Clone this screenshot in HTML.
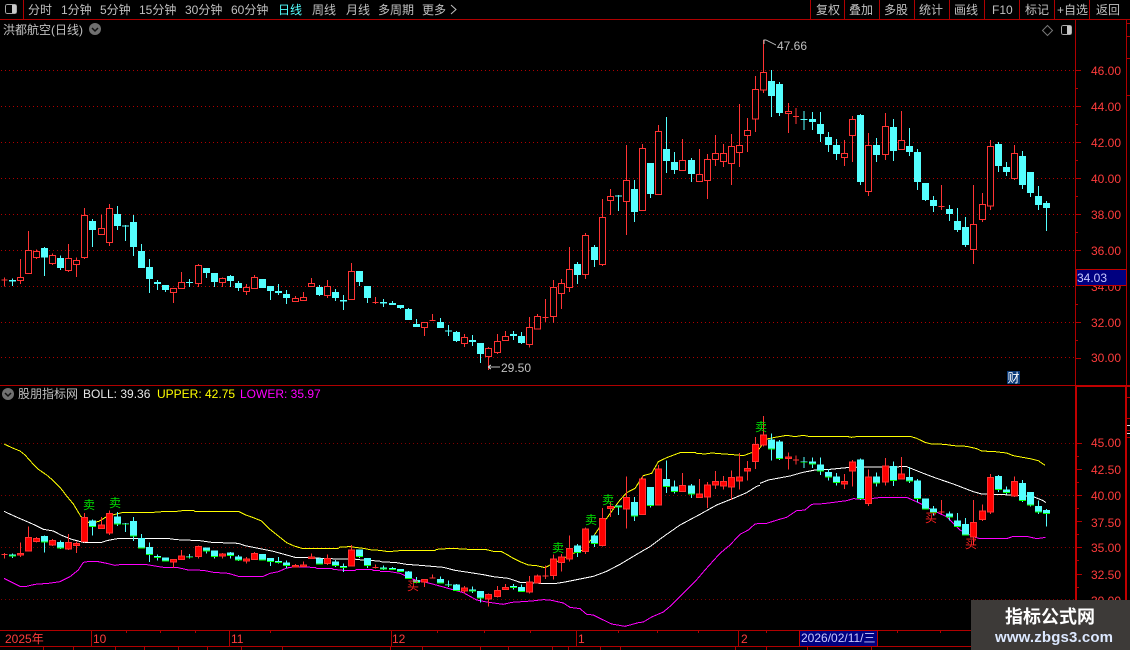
<!DOCTYPE html>
<html><head><meta charset="utf-8"><title>K</title>
<style>
html,body{margin:0;padding:0;background:#000;width:1130px;height:650px;overflow:hidden}
svg{display:block;position:absolute;left:0;top:0}
text{font-family:"Liberation Sans","WenQuanYi Zen Hei","Noto Sans CJK SC",sans-serif;font-size:12px}
.m{fill:#c0c0c0}
.ax{fill:#ff3c3c}
.w path,.b path,.r path{fill:none;vector-effect:non-scaling-stroke;stroke-width:1}
.b path{stroke-width:7}
.r path{fill:var(--rf,#000)}
.l{fill:none;stroke-width:1;vector-effect:non-scaling-stroke;shape-rendering:crispEdges}
</style></head>
<body>
<svg width="1130" height="650" viewBox="0 0 1130 650" xmlns="http://www.w3.org/2000/svg">
<defs>
<g id="rw" class="w" shape-rendering="crispEdges">
<path transform="translate(0 190) scale(.33333)" d="M13.5 262V290M61.5 207V282M85.5 123V251M109.5 178V207M157.5 190V225M205.5 162V246M229.5 202V261M253.5 54V207M304.5 74V134M328.5 42V168M520.5 295V339M544.5 246V296M595.5 222V291M667.5 262V291M739.5 282V315M763.5 255V296M886.5 318V335M910.5 306V332M934.5 264V290M982.5 270V324M1054.5 219V329M1126.5 321V342"/>
<path transform="translate(380 120) scale(.33333)" d="M133.5 606V648M157.5 582V603M253.5 642V681M325.5 681V750M352.5 642V702M376.5 633V662M448.5 591V683M472.5 582V628M496.5 537V606M520.5 480V609M544.5 477V567M568.5 381V516M616.5 339V477M667.5 237V438M691.5 207V285M739.5 75V345M787.5 72V272M835.5 15V224M907.5 57V152M958.5 87V185M982.5 102V237M1006.5 45V138M1030.5 72V141M1054.5 42V195M1078.5 -48V141M1102.5 -6V96"/>
<path transform="translate(740 30) scale(.33333)" d="M46.5 138V306M70.5 30V189M145.5 219V309M168.5 234V282M313.5 330V408M337.5 258V396M385.5 309V498M436.5 249V390M484.5 243V359M604.5 465V540M700.5 465V702M727.5 489V576M751.5 330V540M823.5 345V450"/>
</g>
<g id="rb" class="r" shape-rendering="crispEdges">
<path transform="translate(0 190) scale(.33333)" d="M4.5 270h18M52.5 263h18V271h-18zM76.5 182h18V250h-18zM100.5 185h18V202h-18zM148.5 197h18V220h-18zM196.5 206h18V241h-18zM220.5 212h18V223h-18zM244.5 77h18V202h-18zM295.5 116h18V133h-18zM319.5 56h18V157h-18zM511.5 296h18V307h-18zM535.5 278h18V295h-18zM586.5 227h18V280h-18zM658.5 266h18V277h-18zM730.5 293h18V304h-18zM754.5 263h18V295h-18zM877.5 326h18V334h-18zM901.5 323h18V331h-18zM925.5 281h18V289h-18zM973.5 290h18V316h-18zM1045.5 245h18V328h-18zM1117.5 338h18"/>
<path transform="translate(380 120) scale(.33333)" d="M124.5 608h18V623h-18zM148.5 601h18M244.5 653h18V670h-18zM316.5 686h18V710h-18zM343.5 665h18V697h-18zM367.5 650h18V661h-18zM439.5 623h18V673h-18zM463.5 590h18V627h-18zM487.5 592h18M511.5 503h18V589h-18zM535.5 491h18V520h-18zM559.5 449h18V502h-18zM607.5 347h18V463h-18zM658.5 293h18V433h-18zM682.5 230h18V241h-18zM730.5 182h18V244h-18zM778.5 86h18V271h-18zM826.5 35h18V223h-18zM898.5 122h18V151h-18zM949.5 164h18V184h-18zM973.5 119h18V181h-18zM997.5 101h18V118h-18zM1021.5 101h18V124h-18zM1045.5 80h18V130h-18zM1069.5 77h18V97h-18zM1093.5 32h18V46h-18z"/>
<path transform="translate(740 30) scale(.33333)" d="M37.5 179h18V267h-18zM61.5 128h18V180h-18zM136.5 244h18V250h-18zM159.5 259h18M304.5 371h18V382h-18zM328.5 269h18V316h-18zM376.5 347h18V484h-18zM427.5 290h18V373h-18zM475.5 332h18V358h-18zM595.5 529h18M691.5 584h18V658h-18zM718.5 524h18V568h-18zM742.5 350h18V528h-18zM814.5 371h18V445h-18z"/>
</g>
<g id="cw" class="w" shape-rendering="crispEdges">
<path transform="translate(0 190) scale(.33333)" d="M37.5 265V288M133.5 171V258M181.5 196V240M277.5 87V171M352.5 48V120M376.5 105V153M400.5 75V198M424.5 162V234M448.5 207V309M472.5 270V300M496.5 285V306M568.5 267V291M619.5 234V264M643.5 249V291M691.5 255V291M715.5 273V303M787.5 267V294M811.5 288V330M835.5 282V315M859.5 300V342M958.5 285V318M1006.5 297V333M1030.5 315V360M1078.5 243V288M1102.5 288V339"/>
<path transform="translate(380 120) scale(.33333)" d="M10.5 537V561M37.5 543V555M61.5 555V567M85.5 564V600M109.5 597V621M181.5 594V624M205.5 615V648M229.5 633V666M277.5 645V678M301.5 669V729M400.5 633V660M424.5 636V672M592.5 426V492M643.5 375V441M715.5 225V273M763.5 180V306M811.5 129V234M859.5 -9V159M883.5 96V162M934.5 114V186"/>
<path transform="translate(740 30) scale(.33333)" d="M94.5 120V261M118.5 156V258M192.5 243V300M217.5 246V300M241.5 246V336M265.5 306V366M289.5 327V390M361.5 252V465M409.5 324V396M460.5 267V393M508.5 294V378M532.5 357V480M556.5 459V513M580.5 498V546M628.5 525V573M652.5 534V606M676.5 561V651M775.5 336V426M799.5 396V438M847.5 363V477M871.5 426V501M895.5 468V540M919.5 513V603"/>
</g>
<g id="cb" class="b" shape-rendering="crispEdges">
<path transform="translate(0 190) scale(.33333)" d="M37.5 270V275M133.5 174V203M181.5 204V234M277.5 93V120M352.5 72V108M376.5 107V110M400.5 96V171M424.5 183V234M448.5 231V267M472.5 276V282M496.5 285V300M568.5 276V279M619.5 234V249M643.5 249V276M691.5 258V273M715.5 279V294M787.5 267V294M811.5 288V303M835.5 303V309M859.5 312V324M958.5 291V315M1006.5 306V324M1030.5 330V335M1078.5 243V276M1102.5 288V324"/>
<path transform="translate(380 120) scale(.33333)" d="M10.5 546V551M37.5 549V555M61.5 555V564M85.5 567V600M109.5 612V621M181.5 606V624M205.5 632V635M229.5 636V663M277.5 660V666M301.5 669V702M400.5 642V648M424.5 648V669M592.5 432V465M643.5 381V420M715.5 226V230M763.5 207V276M811.5 129V222M859.5 87V123M883.5 126V150M934.5 120V162"/>
<path transform="translate(740 30) scale(.33333)" d="M94.5 153V198M118.5 162V249M192.5 267V270M217.5 267V276M241.5 282V312M265.5 321V345M289.5 345V372M361.5 255V456M409.5 345V375M460.5 291V363M508.5 348V366M532.5 366V456M556.5 459V510M580.5 510V528M628.5 537V552M652.5 573V600M676.5 591V645M775.5 342V408M799.5 411V426M847.5 378V465M871.5 426V489M895.5 498V525M919.5 519V534"/>
</g>
</defs>

<!-- grid -->
<g stroke="#b00000" stroke-width="1" stroke-dasharray="1 3" shape-rendering="crispEdges">
<path d="M1 70.5H1075M1 106.5H1075M1 142.5H1075M1 178.5H1075M1 214.5H1075M1 250.5H1075M1 286.5H1075M1 322.5H1075M1 357.5H1075"/>
</g>
<g stroke="#800000" stroke-width="1" stroke-dasharray="1 3" shape-rendering="crispEdges">
<path d="M1 443.5H1075M1 495.5H1075M1 547.5H1075M1 599.5H1075"/>
</g>

<!-- frame -->
<g stroke="#b00000" stroke-width="1" shape-rendering="crispEdges" fill="none">
<path d="M0 19.5H1130M23.5 0V19M810.5 0V19M844.5 0V19M879.5 0V19M914.5 0V19M949.5 0V19M984.5 0V19M1019.5 0V19M1054.5 0V19M1089.5 0V19"/>
<path d="M1075.5 20V385M1126.5 20V385M0 385.5H1075"/>
<path d="M0 630.5H1075M0 646.5H1075"/>
<path d="M91.5 630V646M229.5 630V646M391.5 630V646M576.5 630V646M738.5 630V646"/>
<path d="M126.5 630V633M160.5 630V633M195.5 630V633M270.5 630V633M437.5 630V633M484.5 630V633M530.5 630V633M618.5 630V633M657.5 630V633M698.5 630V633M766.5 630V633M897.5 630V633M940.5 630V633"/>
<path d="M43.5 646V650M73.5 646V650M115.5 646V650M144.5 646V650M178.5 646V650M207.5 646V650M241.5 646V650M282.5 646V650M390.5 646V650M422.5 646V650M480.5 646V650M508.5 646V650M552.5 646V650M568.5 646V650M600.5 646V650M620.5 646V650M735.5 646V650M766.5 646V650M807.5 646V650M871.5 646V650"/>
<path d="M1076 70.5h5M1076 106.5h5M1076 142.5h5M1076 178.5h5M1076 214.5h5M1076 250.5h5M1076 322.5h5M1076 358.5h5M1076 88.5h2M1076 124.5h2M1076 160.5h2M1076 196.5h2M1076 232.5h2M1076 304.5h2M1076 340.5h2"/>
<path d="M1077 443.5h5M1077 469.5h5M1077 495.5h5M1077 521.5h5M1077 547.5h5M1077 574.5h5M1077 456.5h2M1077 482.5h2M1077 508.5h2M1077 534.5h2M1077 560.5h2M1077 587.5h2"/>
<path d="M1127 23.5h3M1127 36.5h3M1127 58.5h3M1127 95.5h3M1127 430.5h3M1127 397.5h3M1127 418.5h3M1127 437.5h3"/>
</g>
<g fill="#c00000" shape-rendering="crispEdges">
<rect x="1075" y="385" width="55" height="2"/>
<rect x="1075" y="385" width="2" height="246"/>
<rect x="1125" y="385" width="2" height="246"/>
</g>
<rect x="1127" y="425" width="3" height="1" fill="#ddd"/>
<rect x="1127" y="433" width="3" height="1" fill="#ddd"/>

<!-- upper candles -->
<g stroke="#ff3333" style="--rf:#000"><use href="#rw"/><use href="#rb"/></g>
<g stroke="#54ffff"><use href="#cw"/><use href="#cb"/></g>

<!-- boll lines -->
<g transform="translate(0 380) scale(.33333)">
<polyline class="l" stroke="#ffff00" points="12,192 40,205 60,213 75,225 100,253 115,268 140,285 160,302 180,322 200,348 220,372 243,410 265,427 295,425 320,410 345,403 370,397 460,397 500,394 530,394 555,391 580,391 585,394 715,394 735,404 760,413 785,423 810,448 835,468 860,488 880,497 905,505 1015,505 1020,501 1050,500 1090,505 1115,510 1140,511"/>
<polyline class="l" stroke="#ffffff" points="12,394 40,407 70,420 100,433 130,448 160,453 185,466 215,478 250,487 305,487 320,482 340,478 360,475 500,475 530,479 600,482 635,487 715,490 735,497 760,502 790,508 820,514 860,525 885,532 920,533 1015,537 1060,537 1095,541 1140,543"/>
<polyline class="l" stroke="#ff00ff" points="12,595 60,619 80,619 105,613 145,610 180,605 210,590 235,570 250,547 270,544 290,544 320,550 345,556 365,553 435,553 465,558 490,562 530,562 565,570 610,571 640,577 685,580 715,589 790,589 810,580 835,575 860,564 880,561 945,562 950,565 995,565 1000,568 1030,571 1065,571 1070,568 1115,568 1120,571 1140,571"/>
</g>
<g transform="translate(380 410) scale(.33333)">
<polyline class="l" stroke="#ffff00" points="0,421 25,425 70,421 165,421 170,418 215,415 265,418 315,418 340,424 365,425 385,436 400,445 420,455 445,465 470,467 495,473 520,460 550,445 580,430 610,420 640,380 660,350 680,325 700,297 720,270 740,248 765,235 790,197 815,190 835,155 860,143 900,128 945,127 950,130 975,132 995,129 1020,131 1060,134 1090,137 1115,128 1140,115"/>
<polyline class="l" stroke="#ffffff" points="0,455 50,458 80,463 120,466 190,472 225,481 265,487 310,494 340,500 385,505 420,517 500,521 530,520 555,516 590,509 640,499 680,484 720,463 770,433 810,410 850,380 900,345 960,313 1010,285 1060,265 1100,248 1130,229 1140,226"/>
<polyline class="l" stroke="#ff00ff" points="0,485 30,485 60,490 100,508 150,520 190,531 250,548 290,570 320,576 370,583 395,577 410,576 455,573 490,569 510,570 550,579 570,592 600,596 620,613 640,615 670,630 695,642 735,649 750,645 775,638 790,636 815,621 850,606 875,585 945,515 975,480 1020,430 1050,405 1080,373 1105,360 1125,342 1140,340"/>
</g>
<g transform="translate(740 380) scale(.33333)">
<polyline class="l" stroke="#ffff00" points="60,204 75,178 100,173 140,166 165,170 190,166 210,170 325,170 335,172 355,169 510,169 530,175 555,187 575,192 615,193 640,197 680,199 710,206 725,213 765,215 800,219 820,227 870,236 895,242 915,256"/>
<polyline class="l" stroke="#ffffff" points="60,310 85,300 150,288 185,278 225,270 270,268 330,262 500,260 550,280 590,295 640,312 700,335 725,342 820,345 880,350 910,362 917,368"/>
<polyline class="l" stroke="#ff00ff" points="60,431 80,430 115,419 140,412 170,392 195,390 215,373 250,371 320,362 340,356 375,358 425,352 500,352 540,370 580,392 620,410 660,450 700,470 720,476 800,476 820,469 860,469 890,476 917,472"/>
</g>

<!-- lower candles -->
<g transform="translate(0 444) scale(1 .5778) translate(0 -88.5)">
<g stroke="#ff3333" style="--rf:#ff0000"><use href="#rw"/><use href="#rb"/></g>
<g stroke="#54ffff"><use href="#cw"/></g>
</g>
<g transform="translate(0 445) scale(1 .5778) translate(0 -88.5)"><g stroke="#00ff00"><use href="#cb"/></g></g>
<g transform="translate(0 444) scale(1 .5778) translate(0 -88.5)"><g stroke="#54ffff"><use href="#cb"/></g></g>

<!-- signals -->
<g fill="#00e000" text-anchor="middle">
<text x="89" y="509">卖</text><text x="115" y="507">卖</text><text x="558" y="552">卖</text><text x="591" y="524">卖</text><text x="608" y="504">卖</text><text x="761" y="431">卖</text>
</g>
<g fill="#ff2020" text-anchor="middle">
<text x="413" y="590">买</text><text x="931" y="522">买</text><text x="971" y="548">买</text>
</g>

<!-- top toolbar -->
<g fill="none" stroke="#a8a8a8" shape-rendering="crispEdges">
<rect x="5.5" y="4.5" width="11" height="9" rx="2"/>
<rect x="1061.5" y="25.5" width="10" height="9" rx="2"/>
</g>
<rect x="12" y="5" width="4" height="8" fill="#c8c8c8"/>
<rect x="1067" y="26" width="4" height="8" fill="#c8c8c8"/>
<path d="M1047.5 25.5l5 5-5 5-5-5z" fill="none" stroke="#777"/>
<g class="m">
<text class="m" x="28" y="14">分时</text>
<text class="m" x="61" y="14">1分钟</text>
<text class="m" x="100" y="14">5分钟</text>
<text class="m" x="139" y="14">15分钟</text>
<text class="m" x="185" y="14">30分钟</text>
<text class="m" x="231" y="14">60分钟</text>
<text x="278" y="14" fill="#54ffff">日线</text>
<text class="m" x="312" y="14">周线</text>
<text class="m" x="346" y="14">月线</text>
<text class="m" x="378" y="14">多周期</text>
<text class="m" x="422" y="14">更多</text>
<path d="M451 5l5 4.5-5 4.5" fill="none" stroke="#c0c0c0"/>
<text class="m" x="816" y="14">复权</text>
<text class="m" x="849" y="14">叠加</text>
<text class="m" x="884" y="14">多股</text>
<text class="m" x="919" y="14">统计</text>
<text class="m" x="954" y="14">画线</text>
<text class="m" x="992" y="14">F10</text>
<text class="m" x="1025" y="14">标记</text>
<text class="m" x="1057" y="14">+自选</text>
<text class="m" x="1096" y="14">返回</text>
</g>

<!-- titles -->
<text class="m" x="3" y="34">洪都航空(日线)</text>
<circle cx="95" cy="29" r="6" fill="#707070"/><path d="M92 28l3 3 3-3" fill="none" stroke="#111" stroke-width="1.5"/>
<circle cx="8" cy="394" r="6" fill="#707070"/><path d="M5 393l3 3 3-3" fill="none" stroke="#111" stroke-width="1.5"/>
<text class="m" x="18" y="398">股朋指标网</text>
<text x="83" y="398" fill="#e8e8e8">BOLL: 39.36</text>
<text x="157" y="398" fill="#ffff00">UPPER: 42.75</text>
<text x="240" y="398" fill="#ff00ff">LOWER: 35.97</text>

<!-- high/low marks -->
<path d="M764 44V40h2l10 5" fill="none" stroke="#c0c0c0" shape-rendering="crispEdges"/>
<text class="m" x="777" y="50">47.66</text>
<path d="M488 367h12M488 367l3-2M488 367l3 2" fill="none" stroke="#c0c0c0" shape-rendering="crispEdges"/>
<text class="m" x="501" y="372">29.50</text>

<!-- axis labels -->
<g class="ax">
<text class="ax" x="1091" y="75">46.00</text>
<text class="ax" x="1091" y="111">44.00</text>
<text class="ax" x="1091" y="147">42.00</text>
<text class="ax" x="1091" y="183">40.00</text>
<text class="ax" x="1091" y="219">38.00</text>
<text class="ax" x="1091" y="255">36.00</text>
<text class="ax" x="1091" y="291">34.00</text>
<text class="ax" x="1091" y="327">32.00</text>
<text class="ax" x="1091" y="362">30.00</text>
<text class="ax" x="1091" y="447">45.00</text>
<text class="ax" x="1091" y="474">42.50</text>
<text class="ax" x="1091" y="500">40.00</text>
<text class="ax" x="1091" y="527">37.50</text>
<text class="ax" x="1091" y="552">35.00</text>
<text class="ax" x="1091" y="579">32.50</text>
<text class="ax" x="1091" y="605">30.00</text>
</g>
<rect x="1076.5" y="269.5" width="50" height="16" fill="#000080" stroke="#c00000" shape-rendering="crispEdges"/>
<text x="1077" y="282" fill="#c8c8ff">34.03</text>

<!-- 财 -->
<rect x="1007" y="371" width="13" height="13" fill="#0a3a78"/>
<text x="1007.5" y="382" fill="#fff">财</text>

<!-- bottom axis -->
<text class="ax" x="5" y="643">2025年</text>
<text class="ax" x="93" y="643">10</text>
<text class="ax" x="231" y="643">11</text>
<text class="ax" x="392" y="643">12</text>
<text class="ax" x="578" y="643">1</text>
<text class="ax" x="741" y="643">2</text>
<rect x="799.5" y="630.5" width="78" height="16" fill="#000080" stroke="#c00000" shape-rendering="crispEdges"/>
<text x="801" y="642" fill="#c8c8ff">2026/02/11/三</text>

<!-- watermark -->
<rect x="971" y="600" width="159" height="50" fill="#3d3a38"/>
<text x="1050" y="623" text-anchor="middle" fill="#fff" font-weight="bold" style="font-size:18px">指标公式网</text>
<text x="1054" y="642" text-anchor="middle" fill="#dce8ff" font-weight="bold" style="font-size:15px" textLength="118">www.zbgs3.com</text>
</svg>
</body></html>
